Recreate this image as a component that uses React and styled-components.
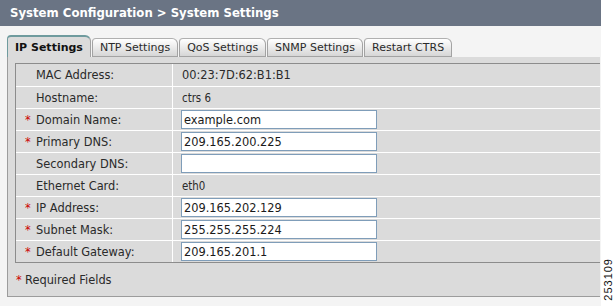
import styled, { createGlobalStyle } from 'styled-components'

const GlobalStyle = createGlobalStyle`
  html, body {
    margin: 0;
    padding: 0;
    background: #ffffff;
  }
  * {
    box-sizing: border-box;
  }
`

const Page = styled.div`
  display: flex;
  width: 614px;
  height: 306px;
  background: #ffffff;
  font-family: "DejaVu Sans", Verdana, sans-serif;
  font-size: 11.4px;
  color: #2a2a2a;
`

const Main = styled.div`
  display: flex;
  flex-direction: column;
  width: 601px;
  background: #f4f4f4;
`

const Header = styled.div`
  height: 26px;
  line-height: 26px;
  padding-left: 10px;
  background: #6a7484;
  color: #ffffff;
  font-family: "DejaVu Sans Condensed", "DejaVu Sans", sans-serif;
  font-weight: bold;
  font-size: 13px;
`

const Body = styled.div`
  display: flex;
  flex-direction: column;
  padding: 9px 1px 9px 7px;
`

const TabBar = styled.div`
  display: flex;
  align-items: flex-end;
  gap: 1px;
  height: 22px;
`

const Tab = styled.div`
  display: flex;
  align-items: center;
  white-space: nowrap;
  padding: 0 7px;
  height: ${p => (p.active ? '22px' : '19px')};
  font-size: 11px;
  font-weight: ${p => (p.active ? 'bold' : 'normal')};
  background: ${p => (p.active ? '#dbdbdb' : 'linear-gradient(#ffffff, #d6d6d6)')};
  border: 1px solid #a3a3a3;
  border-top: ${p => (p.active ? '2px solid #6f9b9e' : '1px solid #b0b0b0')};
  border-left-color: ${p => (p.active ? '#6f9b9e' : '#a3a3a3')};
  border-bottom: ${p => (p.active ? 'none' : '1px solid #a3a3a3')};
  border-radius: 4px 6px 0 0;
  color: ${p => (p.active ? '#111' : '#2a2a2a')};
`

const Panel = styled.div`
  display: flex;
  flex-direction: column;
  background: #dbdbdb;
  border-left: 1px solid #9c9c9c;
  border-bottom: 1px solid #9c9c9c;
  padding: 6px 0 0 7px;
`

const Table = styled.div`
  display: flex;
  flex-direction: column;
  border-top: 1px solid #8c8c8c;
  border-bottom: 1px solid #8c8c8c;
  border-left: 1px solid #8c8c8c;
`

const Row = styled.div`
  display: grid;
  grid-template-columns: 157px 1fr;
  height: 22px;
  border-top: ${p => (p.first ? 'none' : '1px solid #ffffff')};
`

const LabelCell = styled.div`
  display: flex;
  align-items: center;
  padding-left: 9px;
  border-right: 1px solid #ffffff;
  white-space: nowrap;
`

const Star = styled.span`
  display: inline-block;
  width: ${p => p.w || 11}px;
  color: #cc0000;
`

const ValueCell = styled.div`
  display: flex;
  align-items: center;
  padding-left: ${p => (p.input ? '8px' : '9px')};
  white-space: nowrap;
  font-family: ${p => (p.alt ? '"DejaVu Sans Condensed", "DejaVu Sans", sans-serif' : 'inherit')};
`

const Field = styled.input`
  width: 196px;
  height: 19px;
  padding: 0 2px;
  border: 1px solid #7f9db9;
  background: #ffffff;
  font-family: "DejaVu Sans", Verdana, sans-serif;
  font-size: 11.4px;
  color: #1a1a1a;
  outline: none;
`

const Footer = styled.div`
  display: flex;
  align-items: center;
  height: 33px;
  padding-left: 1px;
`

const Side = styled.div`
  display: flex;
  flex-direction: column;
  justify-content: flex-end;
  align-items: center;
  width: 13px;
  padding-bottom: 5px;
`

const FigureId = styled.span`
  writing-mode: vertical-rl;
  transform: rotate(180deg);
  font-family: "Liberation Sans", Arial, sans-serif;
  font-size: 11px;
  letter-spacing: 1px;
  color: #111;
`

const tabs = ['IP Settings', 'NTP Settings', 'QoS Settings', 'SNMP Settings', 'Restart CTRS']

const rows = [
  { label: 'MAC Address:', value: '00:23:7D:62:B1:B1' },
  { label: 'Hostname:', value: 'ctrs 6', alt: true },
  { label: 'Domain Name:', input: 'example.com', req: true },
  { label: 'Primary DNS:', input: '209.165.200.225', req: true },
  { label: 'Secondary DNS:', input: '' },
  { label: 'Ethernet Card:', value: 'eth0', alt: true },
  { label: 'IP Address:', input: '209.165.202.129', req: true },
  { label: 'Subnet Mask:', input: '255.255.255.224', req: true },
  { label: 'Default Gateway:', input: '209.165.201.1', req: true },
]

export default function App() {
  return (
    <Page>
      <GlobalStyle />
      <Main>
        <Header>System Configuration &gt; System Settings</Header>
        <Body>
          <TabBar>
            {tabs.map((t, i) => (
              <Tab key={t} active={i === 0}>{t}</Tab>
            ))}
          </TabBar>
          <Panel>
            <Table>
              {rows.map((r, i) => (
                <Row key={r.label} first={i === 0}>
                  <LabelCell>
                    <Star>{r.req ? '*' : ''}</Star>
                    {r.label}
                  </LabelCell>
                  {r.input !== undefined ? (
                    <ValueCell input>
                      <Field type="text" defaultValue={r.input} />
                    </ValueCell>
                  ) : (
                    <ValueCell alt={r.alt}>{r.value}</ValueCell>
                  )}
                </Row>
              ))}
            </Table>
            <Footer>
              <Star w={9}>*</Star>
              Required Fields
            </Footer>
          </Panel>
        </Body>
      </Main>
      <Side>
        <FigureId>253109</FigureId>
      </Side>
    </Page>
  )
}
